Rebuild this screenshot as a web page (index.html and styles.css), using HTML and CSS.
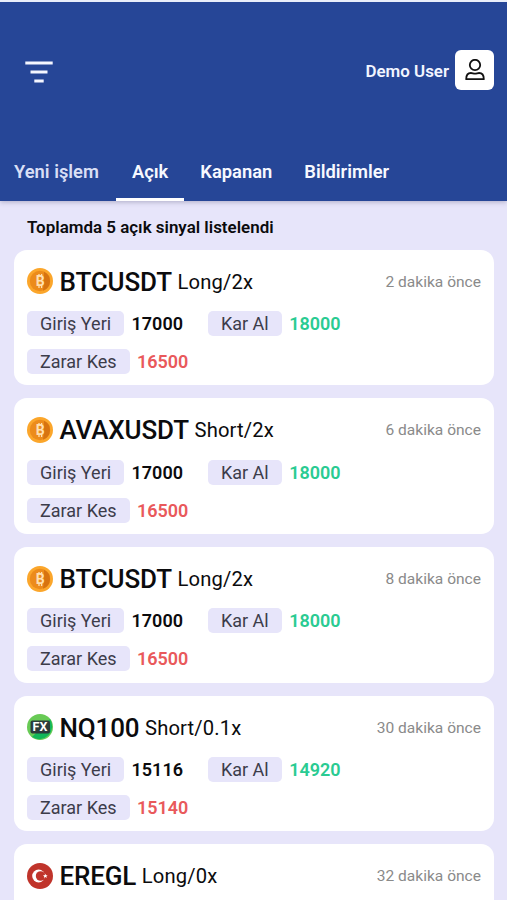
FILE: index.html
```html
<!DOCTYPE html>
<html lang="tr">
<head>
<meta charset="utf-8">
<title>Açık sinyaller</title>
<link rel="stylesheet" href="styles.css">
</head>
<body>
<header class="header">
  <div class="topbar">
    <svg class="menu-icon" viewBox="0 0 28 22" stroke="#f4f6ff" stroke-width="2.8"><path d="M.3 2h27.400M5.500 11h17M9.300 20h9.400"/></svg>
    <div class="user">
      <span>Demo User</span>
      <div class="avatar">
        <svg viewBox="0 0 20 22" fill="none" stroke="#111" stroke-width="1.8" stroke-linejoin="round"><circle cx="10" cy="6" r="5.200"/><path d="M1.200 20.200c0-4.200 1.800-6.200 4.700-6.200 1.600 0 2.400.6 4.100.6s2.500-.6 4.100-.6c2.900 0 4.700 2 4.700 6.200z"/></svg>
      </div>
    </div>
  </div>
  <nav class="tabs">
    <a class="tab first">Yeni işlem</a>
    <a class="tab active">Açık</a>
    <a class="tab">Kapanan</a>
    <a class="tab">Bildirimler</a>
  </nav>
</header>

<main class="content">
  <h2 class="summary">Toplamda 5 açık sinyal listelendi</h2>

  <article class="card">
    <div class="head">
      <svg class="coin" viewBox="0 0 26 26"><circle cx="13" cy="13" r="13" fill="#fba62b"/><circle cx="13" cy="13" r="10.200" fill="#ec8b1b"/><path d="M17 3.700a10.200 10.200 0 0 1-1 19L17 14z" fill="#cf6a0c" opacity=".7"/><path d="M12 6v2.500M14.600 6v2.500M12 17.500v2.500M14.600 17.500v2.500" stroke="#ffdfb0" stroke-width="1.300"/><text x="13.300" y="18" text-anchor="middle" class="coin-letter">B</text></svg>
      <strong class="symbol">BTCUSDT</strong><span class="side">Long/2x</span><time class="time">2 dakika önce</time>
    </div>
    <div class="levels">
      <div class="level"><span class="chip">Giriş Yeri</span><b>17000</b></div>
      <div class="level profit"><span class="chip">Kar Al</span><b>18000</b></div>
      <div class="level loss"><span class="chip">Zarar Kes</span><b>16500</b></div>
    </div>
  </article>

  <article class="card">
    <div class="head">
      <svg class="coin" viewBox="0 0 26 26"><circle cx="13" cy="13" r="13" fill="#fba62b"/><circle cx="13" cy="13" r="10.200" fill="#ec8b1b"/><path d="M17 3.700a10.200 10.200 0 0 1-1 19L17 14z" fill="#cf6a0c" opacity=".7"/><path d="M12 6v2.500M14.600 6v2.500M12 17.500v2.500M14.600 17.500v2.500" stroke="#ffdfb0" stroke-width="1.300"/><text x="13.300" y="18" text-anchor="middle" class="coin-letter">B</text></svg>
      <strong class="symbol">AVAXUSDT</strong><span class="side">Short/2x</span><time class="time">6 dakika önce</time>
    </div>
    <div class="levels">
      <div class="level"><span class="chip">Giriş Yeri</span><b>17000</b></div>
      <div class="level profit"><span class="chip">Kar Al</span><b>18000</b></div>
      <div class="level loss"><span class="chip">Zarar Kes</span><b>16500</b></div>
    </div>
  </article>

  <article class="card">
    <div class="head">
      <svg class="coin" viewBox="0 0 26 26"><circle cx="13" cy="13" r="13" fill="#fba62b"/><circle cx="13" cy="13" r="10.200" fill="#ec8b1b"/><path d="M17 3.700a10.200 10.200 0 0 1-1 19L17 14z" fill="#cf6a0c" opacity=".7"/><path d="M12 6v2.500M14.600 6v2.500M12 17.500v2.500M14.600 17.500v2.500" stroke="#ffdfb0" stroke-width="1.300"/><text x="13.300" y="18" text-anchor="middle" class="coin-letter">B</text></svg>
      <strong class="symbol">BTCUSDT</strong><span class="side">Long/2x</span><time class="time">8 dakika önce</time>
    </div>
    <div class="levels">
      <div class="level"><span class="chip">Giriş Yeri</span><b>17000</b></div>
      <div class="level profit"><span class="chip">Kar Al</span><b>18000</b></div>
      <div class="level loss"><span class="chip">Zarar Kes</span><b>16500</b></div>
    </div>
  </article>

  <article class="card">
    <div class="head">
      <svg class="coin" viewBox="0 0 26 26"><circle cx="13" cy="13" r="13" fill="#68ca55"/><path d="M23 5a13 13 0 0 1-18 18z" fill="#12b75a"/><rect x="3.500" y="6.500" width="19.500" height="13" rx="2" fill="#2c3b3b"/><text x="13" y="17.400" text-anchor="middle" class="fx-letter">FX</text></svg>
      <strong class="symbol">NQ100</strong><span class="side">Short/0.1x</span><time class="time">30 dakika önce</time>
    </div>
    <div class="levels">
      <div class="level"><span class="chip">Giriş Yeri</span><b>15116</b></div>
      <div class="level profit"><span class="chip">Kar Al</span><b>14920</b></div>
      <div class="level loss"><span class="chip">Zarar Kes</span><b>15140</b></div>
    </div>
  </article>

  <article class="card last">
    <div class="head">
      <svg class="coin" viewBox="0 0 26 26"><circle cx="13" cy="13" r="13" fill="#c0342b"/><circle cx="11.600" cy="13" r="6.400" fill="#fff"/><circle cx="13.600" cy="13" r="4.800" fill="#c0342b"/><path d="M18.300 10.700l.7 1.500 1.600.1-1.200 1.100.4 1.600-1.500-.9-1.400.9.3-1.600-1.200-1.100 1.600-.1z" fill="#fff"/></svg>
      <strong class="symbol">EREGL</strong><span class="side">Long/0x</span><time class="time">32 dakika önce</time>
    </div>
  </article>
</main>
</body>
</html>
```
FILE: styles.css
```css
* { box-sizing: border-box; }

body {
  margin: 0;
  height: 900px;
  overflow: hidden;
  display: flex;
  flex-direction: column;
  background: #e7e5fa;
  color: #0b0b0d;
  font-family: Roboto, sans-serif;
}

.header {
  flex: none;
  height: 201px;
  display: flex;
  flex-direction: column;
  justify-content: space-between;
  background: #264697;
  border-top: 2px solid #e9eefa;
  box-shadow: 0 1px 5px rgba(40, 40, 80, .3);
}

.topbar {
  display: flex;
  align-items: center;
  justify-content: space-between;
  padding: 48.4px 13px 0 25px;
}

.menu-icon { width: 28px; height: 22px; margin-top: 3px; }

.user {
  display: flex;
  align-items: center;
  gap: 6px;
  color: #f2f5ff;
  font-size: 16.9px;
  font-weight: 600;
}
.user span { padding-top: 1px; }

.avatar {
  width: 39px;
  height: 40px;
  display: grid;
  place-items: center;
  border-radius: 6px;
  background: #fff;
}
.avatar svg { width: 20px; height: 22px; }

.tabs { display: flex; height: 60px; }
.tab {
  display: flex;
  align-items: center;
  padding: 3px 16px 0;
  border-bottom: 3px solid transparent;
  color: #f7f9ff;
  font-size: 18.35px;
  font-weight: 600;
}
.tab.first { padding-left: 14px; padding-right: 17px; color: #d9dff5; }
.tab.active { border-color: #fff; }

.content {
  display: flex;
  flex-direction: column;
  gap: 13.2px;
  padding: 0 13px 0 14px;
}

.summary {
  margin: 15px 13px 0;
  height: 20.5px;
  font-size: 16.95px;
  line-height: 22px;
  font-weight: 600;
}

.card {
  flex: none;
  height: 135.5px;
  padding: 16px 13px 0;
  border-radius: 13px;
  background: #fff;
}
.card.last { height: 56px; border-radius: 13px 13px 0 0; }

.head { display: flex; align-items: center; height: 31px; }
.coin { flex: none; width: 26px; height: 26px; margin-right: 6.5px; }
.coin-letter { font: 700 14px Roboto, sans-serif; fill: #ffdfb0; }
.fx-letter { font: 700 12.5px Roboto, sans-serif; fill: #fff; }
.symbol { padding-top: 1px; font-size: 26px; font-weight: 500; letter-spacing: -.15px; }
.side { margin-left: 5.6px; padding-top: 1px; font-size: 20.2px; letter-spacing: .15px; }
.time { margin-left: auto; padding-top: 1px; color: #8a8a8a; font-size: 15.55px; }

.levels {
  display: flex;
  flex-wrap: wrap;
  gap: 13px 25px;
  margin-top: 14.2px;
}
.level { display: flex; align-items: center; gap: 7.4px; font-size: 18px; }
.level b { font-weight: 600; }
.chip {
  height: 25px;
  padding: 0 13px;
  border-radius: 5px;
  background: #e7e5fa;
  color: #3c3c4a;
  line-height: 26px;
}
.profit b { color: #2acb92; }
.loss { flex-basis: 100%; }
.loss b { color: #e9595b; }
```
